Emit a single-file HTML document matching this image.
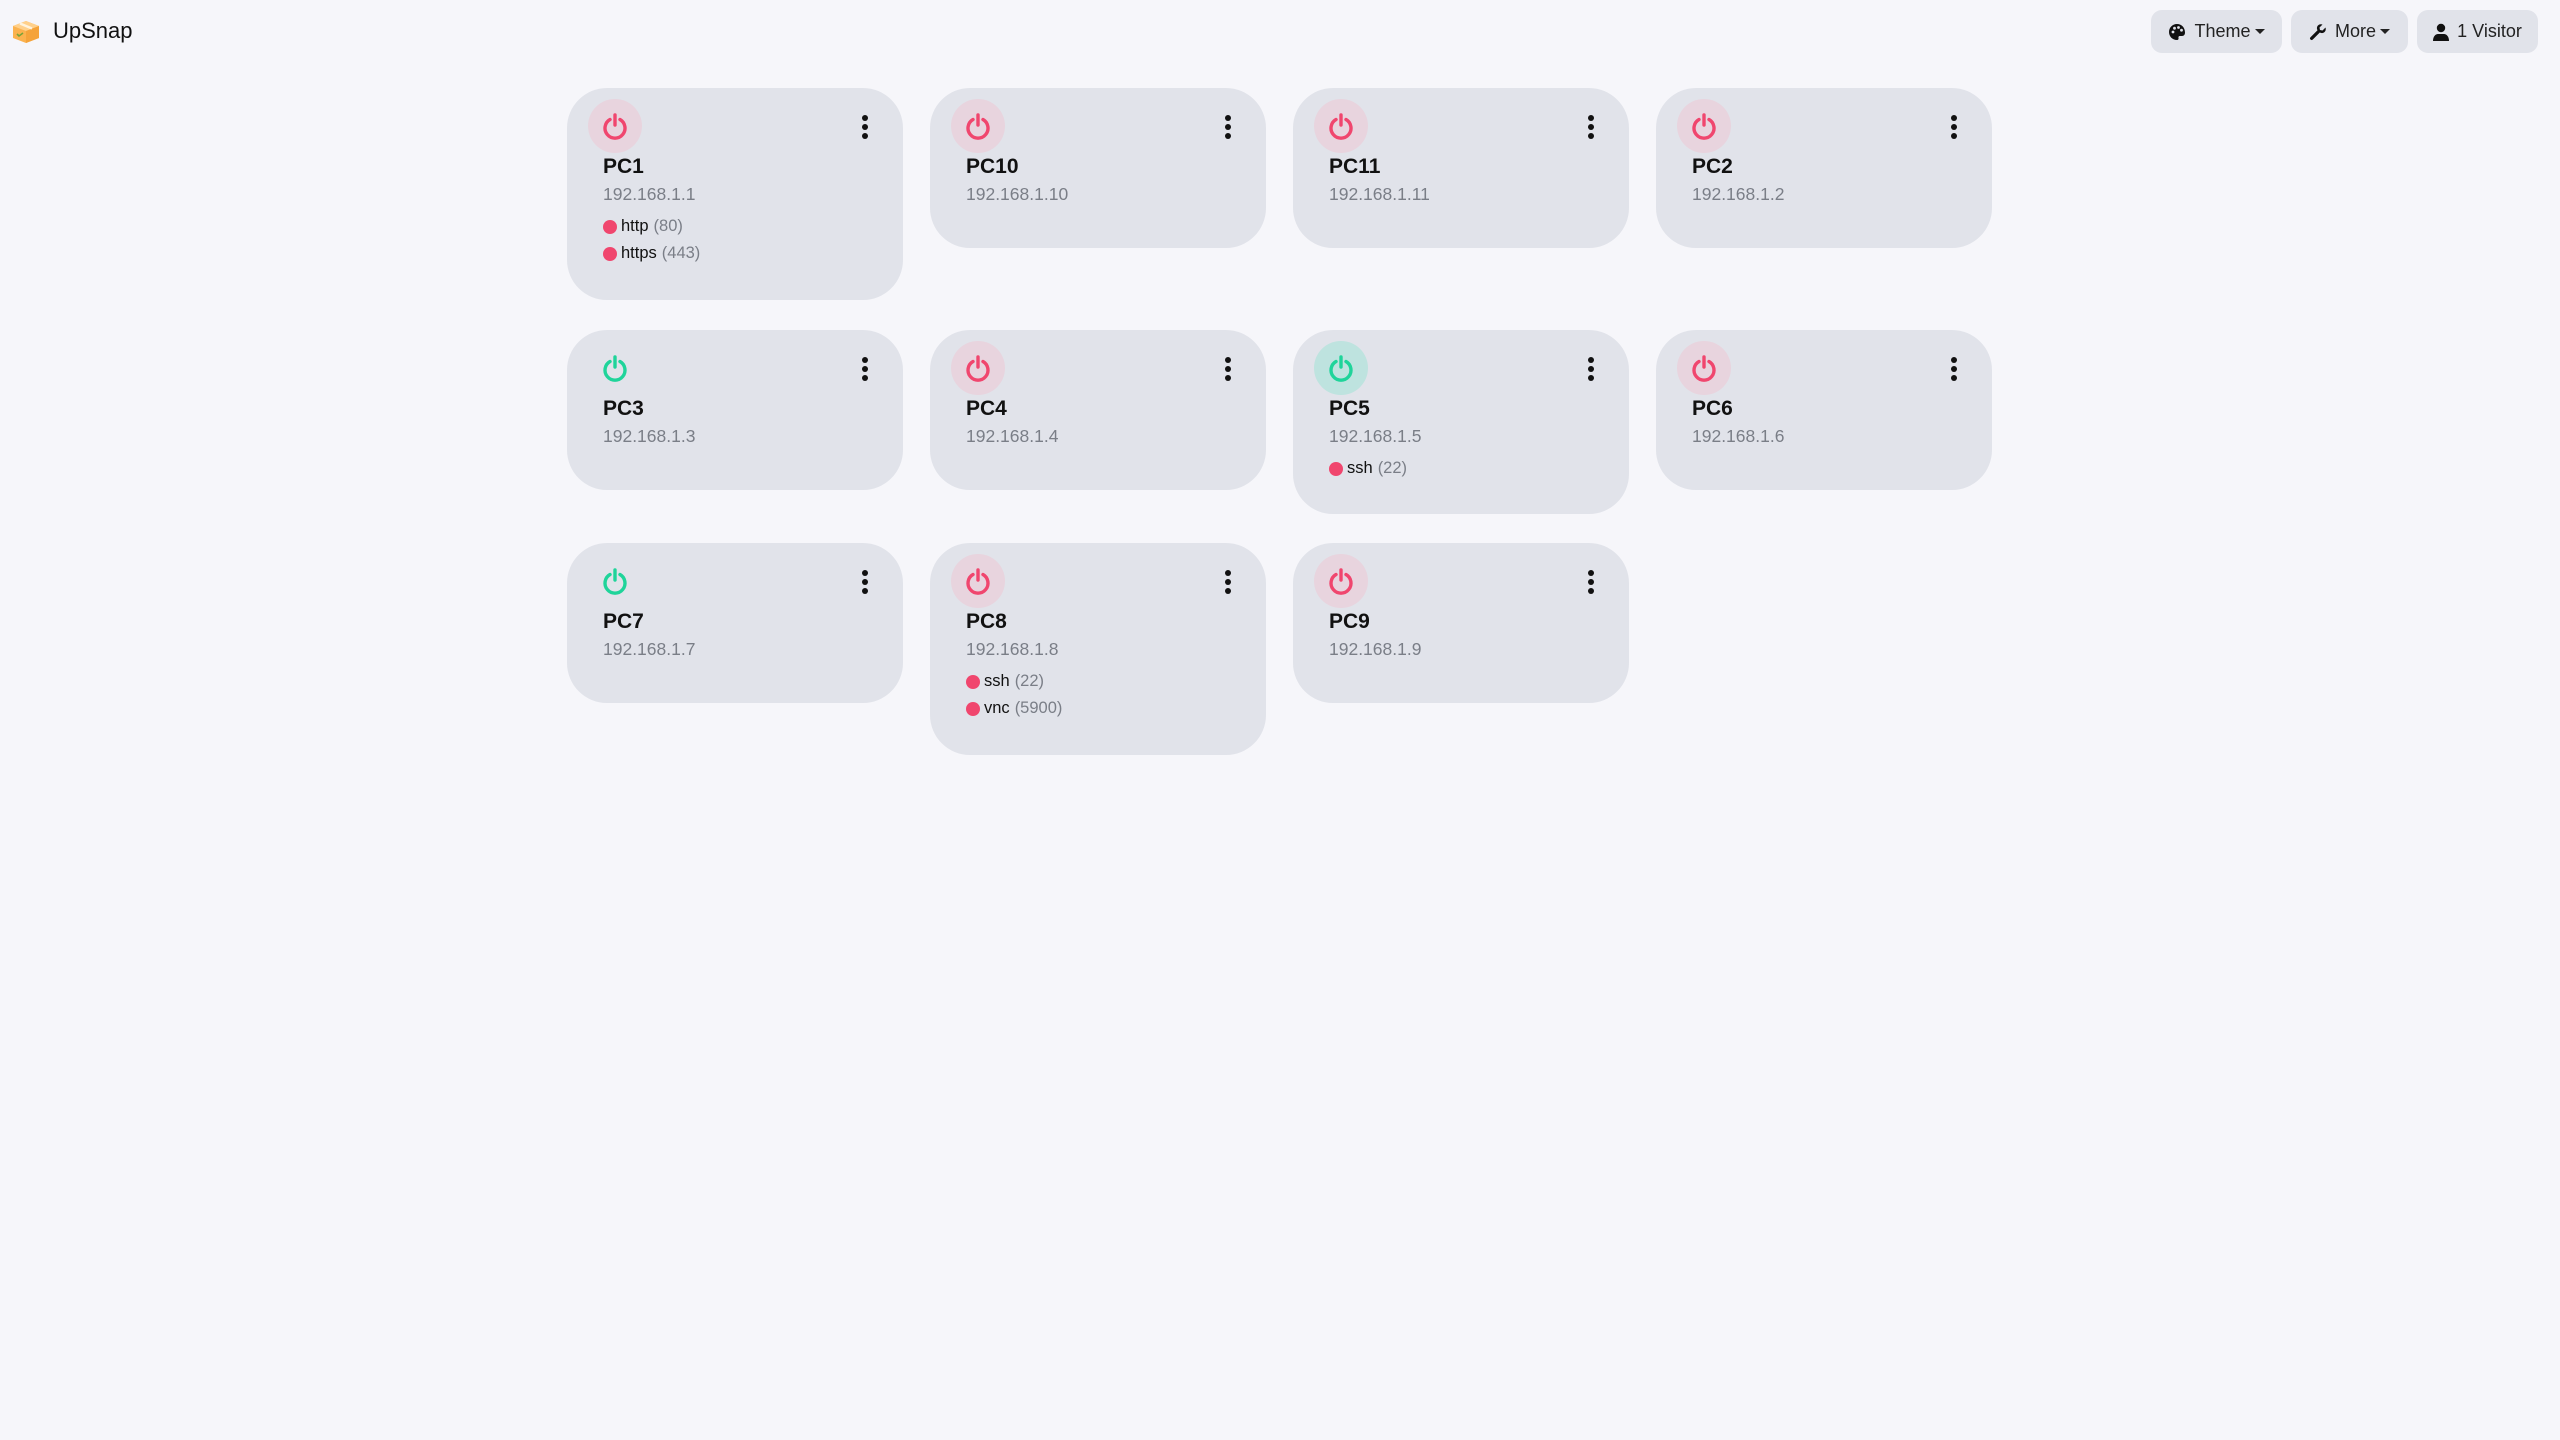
<!DOCTYPE html>
<html><head><meta charset="utf-8"><style>
*{margin:0;padding:0;box-sizing:border-box}
body{width:2560px;height:1440px;background:#f6f6fa;font-family:"Liberation Sans",sans-serif;position:relative;overflow:hidden;color:#111}
.logo{position:absolute;left:12px;top:20px}
.brand{position:absolute;left:53px;top:16px;font-size:22px;color:#111;line-height:30px}
.btn{position:absolute;top:10px;height:43px;background:#e1e3ea;border-radius:11px;font-size:18px;color:#222;display:flex;align-items:center;justify-content:center;gap:8px}
.car{width:0;height:0;border-left:5px solid transparent;border-right:5px solid transparent;border-top:5px solid #222;margin-left:-4px}
.card{position:absolute;width:336px;background:#e1e3ea;border-radius:40px}
.pw{position:absolute;left:21px;top:11px;width:54px;height:54px;border-radius:50%;display:flex;align-items:center;justify-content:center}
.pw.r{background:#e8d4de}.pw.g{background:#bee3df}.pw.n{background:transparent}
.dots{position:absolute;left:295px;top:27px;width:6px}
.dots i{display:block;width:6px;height:6px;border-radius:50%;background:#111;margin-bottom:3px}
.nm{position:absolute;left:36px;top:65px;font-size:21px;font-weight:bold;line-height:28px}
.ip{position:absolute;left:36px;top:94px;font-size:17.5px;line-height:24px;color:#7a7e87}
.pt{position:absolute;left:36px;font-size:16.5px;line-height:27px;color:#111;display:flex;align-items:center}
.pt b{display:inline-block;width:14px;height:14px;border-radius:50%;background:#f0466e;margin-right:4px}
.pt span{color:#7a7e87;margin-left:5px}
</style></head><body>
<svg class="logo" width="28" height="24" viewBox="0 0 28 24"><path d="M1 6 L14 1 L27 6 L27 18 L14 23 L1 18Z" fill="#fbb24e"/><path d="M1 6 L14 11 L27 6 L14 1Z" fill="#ffd08a"/><path d="M14 11 L14 23 L27 18 L27 6Z" fill="#f5a33a"/><path d="M8 3.5 L20 8.5" stroke="#fff3dc" stroke-width="2.5"/><path d="M5 14 l2 2 l4 -3" stroke="#7aa33a" stroke-width="1.6" fill="none"/></svg>
<div class="brand">UpSnap</div>
<div class="btn" style="left:2151px;width:131px"><svg width="18" height="18" viewBox="0 0 18 18"><path d="M9 1C4.5 1 1 4.5 1 9s3.5 8 8 8c1.3 0 1.8-.9 1.5-2-.3-1 .2-2 1.3-2H14c2 0 3-1.5 3-3.5C17 4.5 13.5 1 9 1z" fill="#111"/><circle cx="5" cy="9" r="1.4" fill="#e1e3ea"/><circle cx="6.5" cy="5.2" r="1.4" fill="#e1e3ea"/><circle cx="10.5" cy="4.5" r="1.4" fill="#e1e3ea"/><circle cx="13.5" cy="7.2" r="1.4" fill="#e1e3ea"/></svg>Theme<span class="car"></span></div>
<div class="btn" style="left:2291px;width:117px"><svg width="18" height="18" viewBox="0 0 18 18"><path d="M16.5 4.5l-3 3-2.5-.5-.5-2.5 3-3C11.5.8 9 1.5 8.2 3.6c-.5 1.3-.3 2.6.3 3.6L1.5 14.2a1.6 1.6 0 002.3 2.3l7-7c1 .6 2.3.8 3.6.3 2.1-.8 2.8-3.3 2.1-5.3z" fill="#111"/></svg>More<span class="car"></span></div>
<div class="btn" style="left:2417px;width:121px"><svg width="16" height="18" viewBox="0 0 16 18"><circle cx="8" cy="5" r="4.2" fill="#111"/><path d="M0 18c0-4.5 2.5-7 5-7h6c2.5 0 5 2.5 5 7z" fill="#111"/></svg>1 Visitor</div>

<div id="c"></div>
<script>
const R='#f0466e',G='#1fd49a';
const cards=[
['PC1','192.168.1.1',567,88,'r',[['http','80'],['https','443']]],
['PC10','192.168.1.10',930,88,'r',[]],
['PC11','192.168.1.11',1293,88,'r',[]],
['PC2','192.168.1.2',1656,88,'r',[]],
['PC3','192.168.1.3',567,330,'n',[]],
['PC4','192.168.1.4',930,330,'r',[]],
['PC5','192.168.1.5',1293,330,'g',[['ssh','22']]],
['PC6','192.168.1.6',1656,330,'r',[]],
['PC7','192.168.1.7',567,543,'n',[]],
['PC8','192.168.1.8',930,543,'r',[['ssh','22'],['vnc','5900']]],
['PC9','192.168.1.9',1293,543,'r',[]]];
let h='';
for(const [n,ip,x,y,s,p] of cards){
const col=s=='r'?R:G;
const ht=p.length==0?160:(p.length==1?184:212);
h+=`<div class="card" style="left:${x}px;top:${y}px;height:${ht}px"><div class="pw ${s}"><svg width="28" height="28" viewBox="0 0 28 28"><path d="M9 7.5A10 10 0 1 0 19 7.5" fill="none" stroke="${col}" stroke-width="3.4" stroke-linecap="round"/><path d="M14 3v10" stroke="${col}" stroke-width="3.4" stroke-linecap="round"/></svg></div><div class="dots"><i></i><i></i><i></i></div><div class="nm">${n}</div><div class="ip">${ip}</div>`;
p.forEach((q,i)=>{h+=`<div class="pt" style="top:${125+i*27}px"><b></b>${q[0]}<span>(${q[1]})</span></div>`});
h+='</div>';}
document.getElementById('c').innerHTML=h;
</script>
</body></html>
